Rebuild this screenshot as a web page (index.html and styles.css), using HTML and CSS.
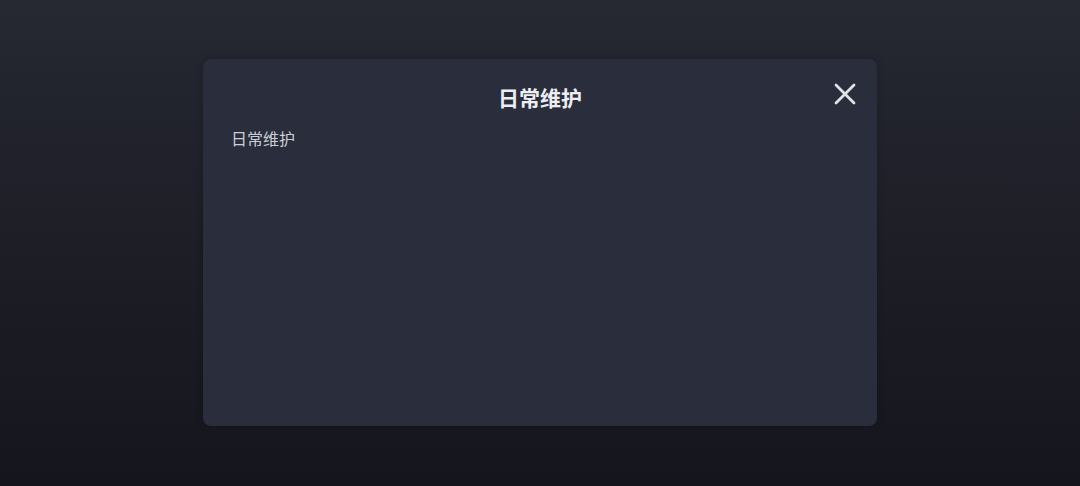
FILE: index.html
```html
<!DOCTYPE html>
<html lang="zh">
<head>
<meta charset="utf-8">
<link rel="stylesheet" href="styles.css">
</head>
<body>
<div class="screen">
  <div class="modal">
    <h2 class="modal-title">日常维护</h2>
    <button class="modal-close" aria-label="关闭">
      <svg width="22" height="22" viewBox="0 0 22 22"><path d="M2 2 L20 20 M20 2 L2 20" stroke="#e2e3e6" stroke-width="2.8" stroke-linecap="round" fill="none"/></svg>
    </button>
    <div class="modal-body">日常维护</div>
  </div>
</div>
</body>
</html>
```
FILE: styles.css
```css
html, body {
  margin: 0;
  padding: 0;
  width: 1080px;
  height: 486px;
  overflow: hidden;
}
body {
  font-family: "Noto Sans CJK SC", "Noto Sans", sans-serif;
  background: linear-gradient(180deg, #262832 0%, #1d1e26 50%, #15151d 100%);
}
.screen {
  height: 486px;
  padding-top: 59px;
  box-sizing: border-box;
  display: flex;
  justify-content: center;
  align-items: flex-start;
}
.modal {
  position: relative;
  width: 674px;
  height: 367px;
  box-sizing: border-box;
  background: #2a2d3c;
  border-radius: 8px;
  padding: 26px 28px 0;
  box-shadow: 0 0 6px rgba(0,0,0,0.25);
}
.modal-title {
  margin: 0;
  text-align: center;
  font-size: 21px;
  line-height: 24px;
  font-weight: 700;
  color: #eceef2;
}
.modal-close {
  position: absolute;
  top: 24px;
  right: 21px;
  width: 22px;
  height: 22px;
  padding: 0;
  border: 0;
  background: none;
  display: flex;
}
.modal-body {
  margin-top: 17px;
  font-size: 16px;
  line-height: 24px;
  color: #cdced4;
}
```
